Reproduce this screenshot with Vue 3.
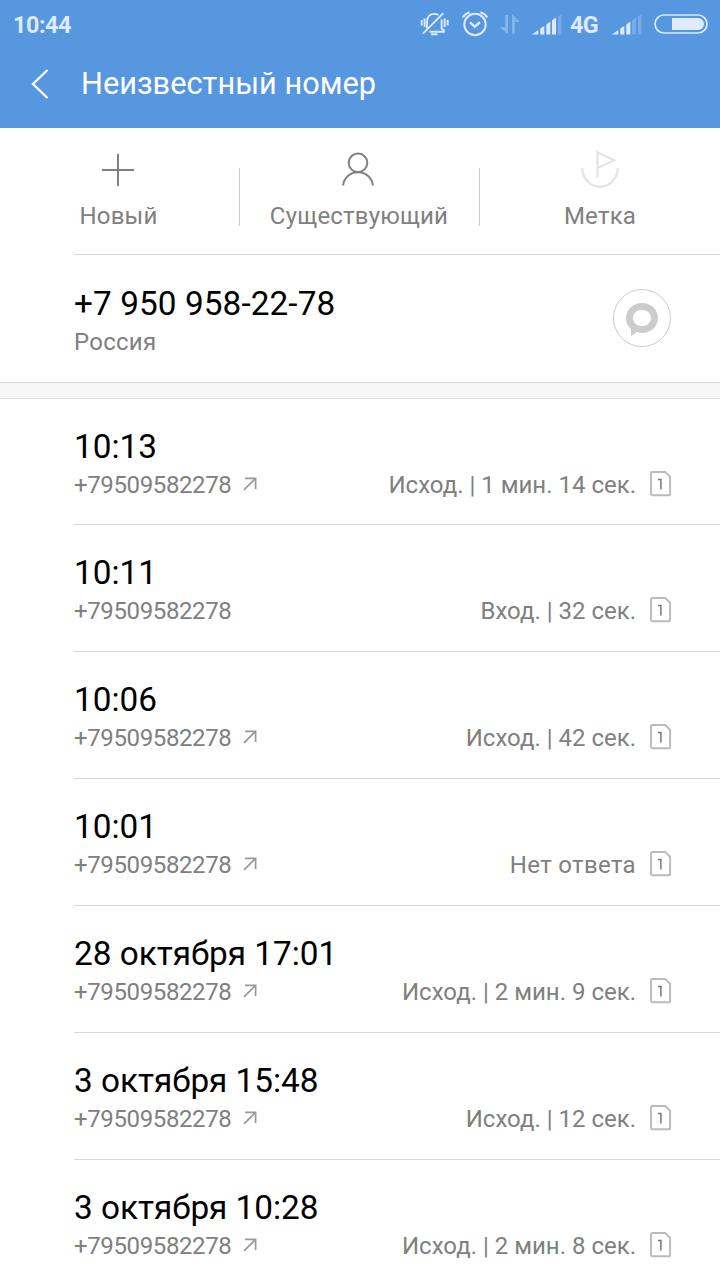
<script setup>
const calls = [
  { when: '10:13', info: 'Исход. | 1 мин. 14 сек.', out: true },
  { when: '10:11', info: 'Вход. | 32 сек.', out: false },
  { when: '10:06', info: 'Исход. | 42 сек.', out: true },
  { when: '10:01', info: 'Нет ответа', out: true, missed: true },
  { when: '28 октября 17:01', info: 'Исход. | 2 мин. 9 сек.', out: true },
  { when: '3 октября 15:48', info: 'Исход. | 12 сек.', out: true },
  { when: '3 октября 10:28', info: 'Исход. | 2 мин. 8 сек.', out: true },
]
</script>

<template>
  <div class="screen">
    <header class="head">
      <div class="status">
        <span class="clock">10:44</span>
        <svg class="s-bell" width="30" height="28" viewBox="0 0 30 28" fill="none" stroke="#dfeafa" stroke-width="1.9">
          <path d="M7 18.500V11.500C7 7 10 3.900 14.300 3.900c1.600 0 3 .4 4.100 1.200M21.600 9.500v9l2.200 1.800v1.500H9.500" />
          <path d="M3 23.700L23.300 3.200" />
          <path d="M11 24.300h6.500" />
          <path d="M4.600 8.500v8.500M1.700 10v5.500M24.700 8.500v8.500M27.700 10v5.500" />
        </svg>
        <svg class="s-alarm" width="28" height="28" viewBox="0 0 28 28" fill="none" stroke="#dfeafa">
          <circle cx="14" cy="14.500" r="10.700" stroke-width="2" />
          <path d="M9 12.300l4.700 4.300 5.300-4.300" stroke-width="2.400" />
          <path d="M1.800 7.500Q4 3.600 8.600 2.200M26.200 7.500Q24 3.600 19.400 2.200" stroke-width="2.200" />
        </svg>
        <svg class="s-data" width="22" height="22" viewBox="0 0 22 22" fill="#86b3e9">
          <path d="M6.300 1h2.800v19.300L.5 13h5.800z" />
          <path d="M13 0l8 8h-5.200v11.800H13z" />
        </svg>
        <svg class="s-sig1" width="30" height="21" viewBox="0 0 30 21" fill="#dfeafa">
          <path d="M0 20.500L6.300 16v4.500zM8.300 14.300l4-2.400v8.600h-4zM14.300 10.500l4-3v13h-4zM20 6.300l4-2.700v16.900h-4z" />
          <path d="M26 2.500L29.500 0v20.500H26z" fill="#79abe7" />
        </svg>
        <span class="net">4G</span>
        <svg class="s-sig2" width="30" height="21" viewBox="0 0 30 21" fill="#dfeafa">
          <path d="M0 20.500L6.300 16v4.500zM8.300 14.300l4-2.400v8.600h-4zM14.300 10.500l4-3v13h-4z" />
          <path d="M20 6.300l4-2.700v16.900h-4zM26 2.500L29.500 0v20.500H26z" fill="#79abe7" />
        </svg>
        <svg class="s-bat" width="54" height="20" viewBox="0 0 54 20">
          <rect x="1" y="1" width="52" height="18" rx="9" fill="none" stroke="#dfeafa" stroke-width="1.700" />
          <path d="M18 4h26a6 6 0 0 1 0 12H18z" fill="#dfeafa" />
        </svg>
      </div>
      <div class="bar">
        <svg class="back" width="18" height="30" viewBox="0 0 18 30" fill="none" stroke="#fff" stroke-width="2.300">
          <path d="M17.500 1L3 15l14.500 14" />
        </svg>
        <h1>Неизвестный номер</h1>
      </div>
    </header>

    <nav class="actions">
      <div class="action new">
        <svg width="40" height="40" viewBox="0 0 40 40" stroke="#808080" stroke-width="2">
          <path d="M4 20h32M20 4v32" />
        </svg>
        <span>Новый</span>
      </div>
      <i class="sep"></i>
      <div class="action existing">
        <svg width="40" height="40" viewBox="0 0 40 40" fill="none" stroke="#808080" stroke-width="2">
          <circle cx="20" cy="12.800" r="9.300" />
          <path d="M5 35.500C6 27.500 12 22.300 20 22.300S34 27.500 35 35.500" />
        </svg>
        <span>Существующий</span>
      </div>
      <i class="sep"></i>
      <div class="action mark">
        <svg width="40" height="40" viewBox="0 0 40 40" fill="none" stroke="#e2e2e2" stroke-width="2">
          <path d="M2.200 18a17.600 18.600 0 0 0 35.600 0" />
          <path d="M17.500 27.500V2.300L34 10.300 17.500 18" />
        </svg>
        <span>Метка</span>
      </div>
    </nav>

    <section class="contact">
      <div>
        <div class="title phone">+7 950 958-22-78</div>
        <div class="sub country">Россия</div>
      </div>
      <svg class="msg" width="58" height="58" viewBox="0 0 58 58">
        <circle cx="29" cy="29" r="28.500" fill="none" stroke="#ccc" />
        <path d="M29 14c9 0 16 6.600 16 15s-7 15-16 15c-2 0-3.900-.3-5.500-.9-1.500 1.900-3.300 3.200-5.800 3.800.5-2.500.4-4.700-.1-7.300C14.500 36.900 13 33.200 13 29c0-8.400 7-15 16-15zm0 7c-5.200 0-9 3.300-9 8s3.800 8 9 8 9-3.300 9-8-3.800-8-9-8z" fill="#ccc" />
      </svg>
    </section>

    <div class="band"></div>

    <ul class="calls">
      <li v-for="c in calls" :key="c.when">
        <div class="title">{{ c.when }}</div>
        <div class="line">
          <span class="sub number">+79509582278</span>
          <svg v-if="c.out" class="arrow" width="14" height="14" viewBox="0 0 14 14" fill="none" stroke="#999" stroke-width="1.700">
            <path d="M2 1.400h10.600v10.600M12.300 1.700L1 12.800" />
          </svg>
          <span class="sub info" :class="{ missed: c.missed }">{{ c.info }}</span>
          <svg class="sim" width="22" height="26" viewBox="0 0 22 26" fill="none">
            <path d="M2.200 1h13l4.900 4.700v17.600a1 1 0 0 1-1 1H2.200a1.200 1.200 0 0 1-1.200-1.200V2.200A1.200 1.200 0 0 1 2.200 1z" stroke="#bbb" stroke-width="1.900" />
            <path d="M8 8.500h2.900V18.500" stroke="#777" stroke-width="1.500" />
          </svg>
        </div>
      </li>
    </ul>
  </div>
</template>

<style>
body {
  margin: 0;
  overflow: hidden;
}
</style>

<style scoped>
.screen {
  width: 720px;
  height: 1280px;
  overflow: hidden;
  background: #fff;
  font-family: Roboto, "Liberation Sans", sans-serif;
  color: #000;
}
svg {
  display: block;
  flex: none;
}
.head {
  height: 128px;
  background: #5797e0;
}
.status {
  display: flex;
  align-items: center;
  height: 48px;
  padding: 0 12px;
  color: #dfeafa;
  font-size: 23.300px;
  font-weight: 700;
}
.clock {
  margin-right: auto;
  padding: 2px 0 0 1px;
  letter-spacing: -0.4px;
}
.s-alarm { margin-left: 11px; }
.s-data { margin-left: 10px; margin-top: 2px; }
.s-sig1 { margin-left: 11px; margin-top: 1px; }
.net {
  width: 29px;
  margin-left: 8px;
  padding-top: 2px;
  letter-spacing: -0.5px;
}
.s-sig2 { margin-left: 13px; margin-top: 1px; }
.s-bat { margin-left: 12px; }
.bar {
  display: flex;
  align-items: center;
  height: 72px;
  padding-left: 30px;
}
.back { margin-top: -1px; }
h1 {
  margin: 0 0 0 33px;
  color: #fff;
  font-size: 30.700px;
  font-weight: 400;
  line-height: 36px;
  letter-spacing: 0.04px;
}
.actions {
  display: flex;
  height: 126px;
  margin-left: 74px;
  border-bottom: 1px solid #d8d8d8;
}
.action {
  display: flex;
  flex-direction: column;
  align-items: center;
  box-sizing: border-box;
  width: 239px;
  padding-top: 22px;
  font-size: 24px;
  line-height: 28px;
  letter-spacing: 0.2px;
  color: #808080;
}
.action span {
  margin-top: 12px;
  padding-left: 1px;
}
.new { width: 165px; padding-right: 77px; }
.existing { padding-right: 3px; }
.existing span { padding-left: 2px; }
.sep {
  width: 1px;
  height: 58px;
  margin-top: 40px;
  background: #ccc;
}
.contact {
  display: flex;
  justify-content: space-between;
  box-sizing: border-box;
  height: 127px;
  padding: 28px 49px 0 74px;
}
.contact > div { padding-top: 1px; }
.msg { margin-top: 6px; }
.title {
  font-size: 33.300px;
  line-height: 40px;
  white-space: nowrap;
}
.phone { letter-spacing: 0.1px; }
.sub {
  font-size: 24px;
  line-height: 28px;
  margin-top: 4px;
  color: #808080;
  white-space: nowrap;
}
.country { letter-spacing: 0.25px; }
.band {
  height: 15px;
  background: #f7f7f7;
  border-top: 1px solid #ddd;
  border-bottom: 1px solid #ddd;
}
.calls {
  margin: 0;
  padding: 0 0 0 74px;
  list-style: none;
}
li {
  box-sizing: border-box;
  height: 127px;
  padding: 28px 48px 0 0;
  border-bottom: 1px solid #d8d8d8;
}
li:first-child { height: 126px; }
.line {
  display: flex;
  align-items: center;
  height: 28px;
  margin-top: 4px;
}
.line .sub { margin-top: 0; }
.line .number { letter-spacing: -0.38px; }
.line .info { margin-left: auto; }
.line .missed { letter-spacing: 0.33px; }
.arrow { margin-left: 12px; margin-top: -2px; }
.sim { margin-left: 14px; margin-top: -2px; }
</style>
